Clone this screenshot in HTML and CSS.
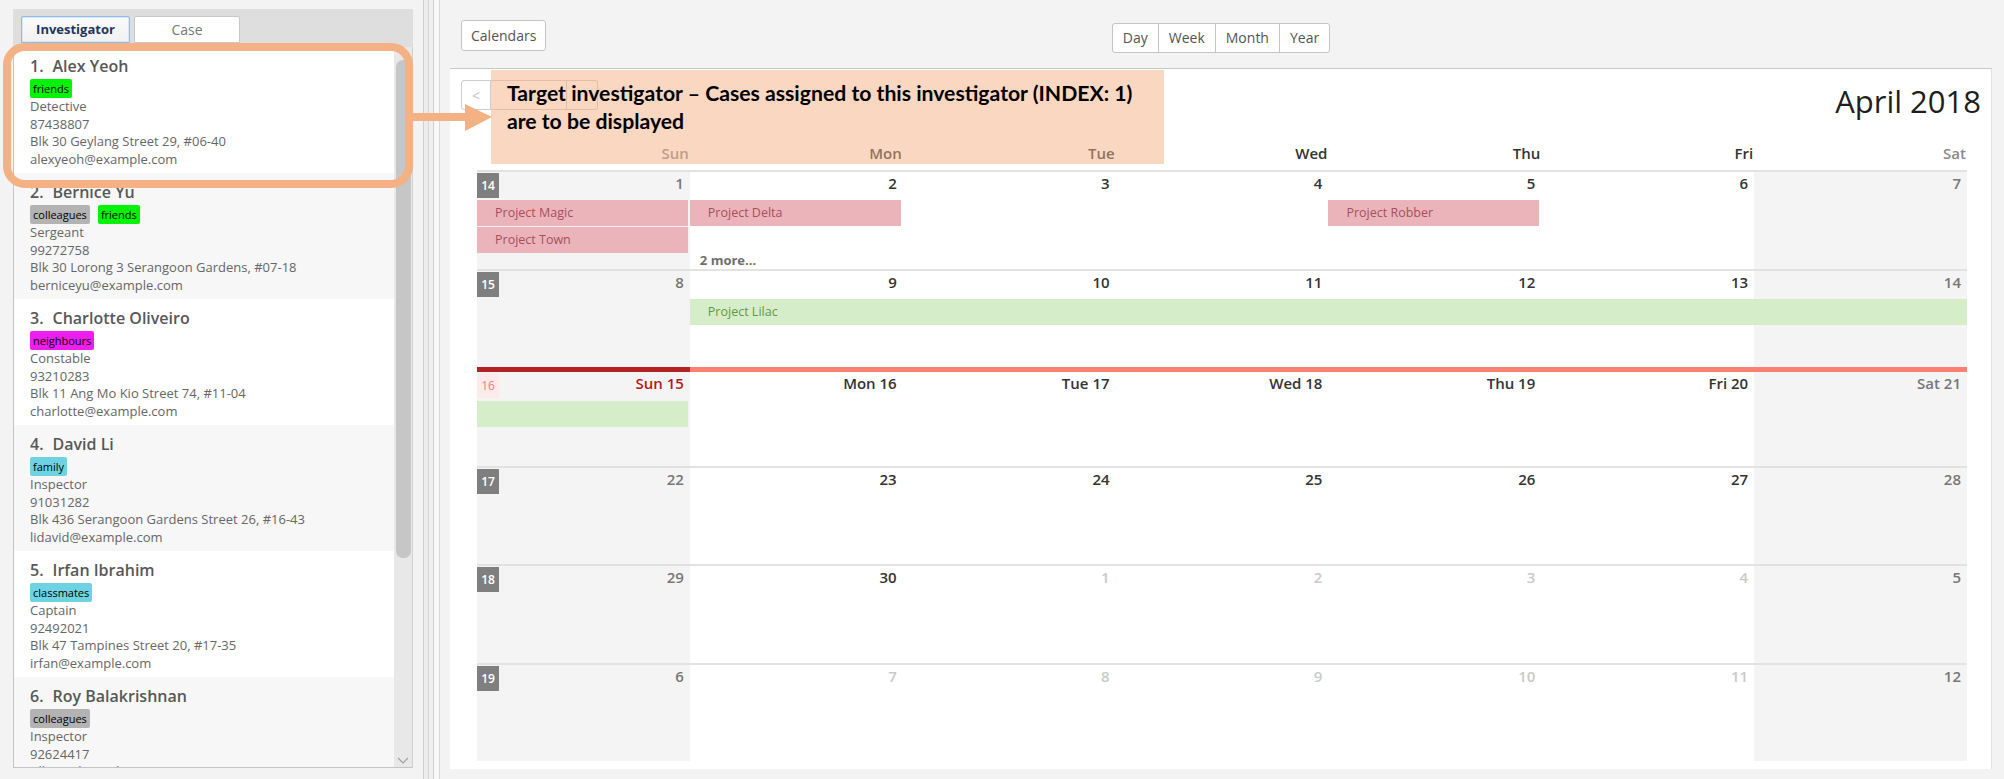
FILE: index.html
```html
<!DOCTYPE html>
<html lang="en">
<head>
<meta charset="utf-8">
<title>Investigators and Calendar</title>
<link rel="stylesheet" href="styles.css">
</head>
<body>
<div class="app">
  <aside class="sidebar">
    <div class="tabs">
      <div class="tab tab-active">Investigator</div>
      <div class="tab tab-case">Case</div>
    </div>
    <div class="list-wrap">
      <div class="list">
        <div class="card">
          <div class="name"><span class="idx">1.</span>Alex Yeoh</div>
          <div class="tags"><span class="tag t-friends">friends</span></div>
          <div class="line">Detective</div>
          <div class="line">87438807</div>
          <div class="line">Blk 30 Geylang Street 29, #06-40</div>
          <div class="line">alexyeoh@example.com</div>
        </div>
        <div class="card">
          <div class="name"><span class="idx">2.</span>Bernice Yu</div>
          <div class="tags"><span class="tag t-colleagues">colleagues</span><span class="tag t-friends">friends</span></div>
          <div class="line">Sergeant</div>
          <div class="line">99272758</div>
          <div class="line">Blk 30 Lorong 3 Serangoon Gardens, #07-18</div>
          <div class="line">berniceyu@example.com</div>
        </div>
        <div class="card">
          <div class="name"><span class="idx">3.</span>Charlotte Oliveiro</div>
          <div class="tags"><span class="tag t-neighbours">neighbours</span></div>
          <div class="line">Constable</div>
          <div class="line">93210283</div>
          <div class="line">Blk 11 Ang Mo Kio Street 74, #11-04</div>
          <div class="line">charlotte@example.com</div>
        </div>
        <div class="card">
          <div class="name"><span class="idx">4.</span>David Li</div>
          <div class="tags"><span class="tag t-family">family</span></div>
          <div class="line">Inspector</div>
          <div class="line">91031282</div>
          <div class="line">Blk 436 Serangoon Gardens Street 26, #16-43</div>
          <div class="line">lidavid@example.com</div>
        </div>
        <div class="card">
          <div class="name"><span class="idx">5.</span>Irfan Ibrahim</div>
          <div class="tags"><span class="tag t-classmates">classmates</span></div>
          <div class="line">Captain</div>
          <div class="line">92492021</div>
          <div class="line">Blk 47 Tampines Street 20, #17-35</div>
          <div class="line">irfan@example.com</div>
        </div>
        <div class="card">
          <div class="name"><span class="idx">6.</span>Roy Balakrishnan</div>
          <div class="tags"><span class="tag t-colleagues">colleagues</span></div>
          <div class="line">Inspector</div>
          <div class="line">92624417</div>
          <div class="line">Blk 45 Aljunied Street 85, #11-31</div>
        </div>
      </div>
      <div class="scrollbar">
        <div class="thumb"></div>
        <svg class="sb-arrow" width="12" height="7" viewBox="0 0 12 7"><path d="M1 1 L6 6 L11 1" fill="none" stroke="#a0a0a0" stroke-width="1.2"/></svg>
      </div>
    </div>
  </aside>

  <div class="splitter"><div class="splitter-bar"></div></div>

  <main class="cal-pane">
    <div class="toolbar">
      <button class="btn btn-cal">Calendars</button>
      <div class="views">
        <span class="view">Day</span>
        <span class="view">Week</span>
        <span class="view">Month</span>
        <span class="view">Year</span>
      </div>
      <div></div>
    </div>

    <section class="month">
      <div class="nav">
        <div class="navbtns">
          <button class="nb nb-prev">&lt;</button>
          <button class="nb nb-today"></button>
          <button class="nb nb-next"></button>
        </div>
        <h1 class="title">April 2018</h1>
      </div>

      <div class="weekdays">
        <div class="wd we">Sun</div>
        <div class="wd">Mon</div>
        <div class="wd">Tue</div>
        <div class="wd">Wed</div>
        <div class="wd">Thu</div>
        <div class="wd">Fri</div>
        <div class="wd we">Sat</div>
      </div>

      <div class="weeks">
        <div class="week">
          <div class="day we"><span class="wk">14</span><span class="date">1</span></div>
          <div class="day"><span class="date">2</span></div>
          <div class="day"><span class="date">3</span></div>
          <div class="day"><span class="date">4</span></div>
          <div class="day"><span class="date">5</span></div>
          <div class="day"><span class="date">6</span></div>
          <div class="day we"><span class="date">7</span></div>
          <div class="ev red ev-magic">Project Magic</div>
          <div class="ev red ev-delta">Project Delta</div>
          <div class="ev red ev-robber">Project Robber</div>
          <div class="ev red ev-town">Project Town</div>
          <div class="more">2 more...</div>
        </div>

        <div class="week">
          <div class="day we"><span class="wk">15</span><span class="date">8</span></div>
          <div class="day"><span class="date">9</span></div>
          <div class="day"><span class="date">10</span></div>
          <div class="day"><span class="date">11</span></div>
          <div class="day"><span class="date">12</span></div>
          <div class="day"><span class="date">13</span></div>
          <div class="day we"><span class="date">14</span></div>
          <div class="ev green ev-lilac">Project Lilac</div>
        </div>

        <div class="week week-now">
          <div class="day we today"><span class="wk wk-now">16</span><span class="date">Sun 15</span></div>
          <div class="day"><span class="date">Mon 16</span></div>
          <div class="day"><span class="date">Tue 17</span></div>
          <div class="day"><span class="date">Wed 18</span></div>
          <div class="day"><span class="date">Thu 19</span></div>
          <div class="day"><span class="date">Fri 20</span></div>
          <div class="day we"><span class="date">Sat 21</span></div>
          <div class="ev green ev-lilac-end"></div>
        </div>

        <div class="week">
          <div class="day we"><span class="wk">17</span><span class="date">22</span></div>
          <div class="day"><span class="date">23</span></div>
          <div class="day"><span class="date">24</span></div>
          <div class="day"><span class="date">25</span></div>
          <div class="day"><span class="date">26</span></div>
          <div class="day"><span class="date">27</span></div>
          <div class="day we"><span class="date">28</span></div>
        </div>

        <div class="week">
          <div class="day we"><span class="wk">18</span><span class="date">29</span></div>
          <div class="day"><span class="date">30</span></div>
          <div class="day"><span class="date muted">1</span></div>
          <div class="day"><span class="date muted">2</span></div>
          <div class="day"><span class="date muted">3</span></div>
          <div class="day"><span class="date muted">4</span></div>
          <div class="day we"><span class="date">5</span></div>
        </div>

        <div class="week">
          <div class="day we"><span class="wk">19</span><span class="date">6</span></div>
          <div class="day"><span class="date muted">7</span></div>
          <div class="day"><span class="date muted">8</span></div>
          <div class="day"><span class="date muted">9</span></div>
          <div class="day"><span class="date muted">10</span></div>
          <div class="day"><span class="date muted">11</span></div>
          <div class="day we"><span class="date">12</span></div>
        </div>
      </div>
    </section>
  </main>
</div>

<div class="annot-ring"></div>
<svg class="annot-arrow" width="90" height="35" viewBox="0 0 90 35">
  <rect x="8" y="13" width="55" height="8" fill="#f4b183"/>
  <polygon points="60,4 87,17 60,31" fill="#f4b183"/>
</svg>
<div class="annot-note">Target investigator – Cases assigned to this investigator (INDEX: 1)<br>are to be displayed</div>
</body>
</html>
```

FILE: styles.css
```css
* { box-sizing: border-box; margin: 0; padding: 0; }

html, body { width: 2004px; height: 779px; overflow: hidden; }

body {
  position: relative;
  background: #f3f3f3;
  font-family: "Open Sans", "Liberation Sans", sans-serif;
  color: #333;
}

.app { display: flex; height: 779px; }

/* ---------- sidebar ---------- */
.sidebar {
  width: 413px;
  padding: 9px 0 11px 13px;
  display: flex;
  flex-direction: column;
}

.tabs {
  height: 38px;
  background: #dedede;
  display: flex;
  gap: 4px;
  padding: 7px 0 0 8px;
}

.tab {
  height: 27px;
  font-size: 14px;
  line-height: 25px;
  text-align: center;
  background: #fff;
  border: 1px solid #c8c8c8;
  border-radius: 2px 2px 0 0;
  color: #777;
}

.tab-active {
  width: 109px;
  font-size: 13px;
  font-weight: 700;
  color: #1d3660;
  background: linear-gradient(#fafafa, #f1f1f1);
  border: 1px solid #8fbbe8;
  box-shadow: inset 0 0 0 1px #d6e7f8;
}

.tab-case { width: 106px; }

.list-wrap {
  flex: 1;
  display: flex;
  border-left: 1px solid #c4c4c4;
  border-bottom: 1px solid #c4c4c4;
  border-right: 1px solid #d0d0d0;
  overflow: hidden;
  background: #fff;
}

.list { width: 380px; overflow: hidden; }

.card {
  height: 126px;
  padding: 8px 0 0 16px;
  background: #fff;
}
.card:nth-child(even) { background: #f7f7f7; }

.name {
  font-size: 16px;
  font-weight: 600;
  line-height: 22px;
  color: #585858;
  white-space: nowrap;
}
.name .idx { margin-right: 9px; }

.tags { display: flex; gap: 8px; margin-top: 2px; height: 19px; }

.tag {
  height: 19px;
  line-height: 19px;
  padding: 0 3px;
  font-size: 11px;
  color: #000;
  border-radius: 2px;
}
.t-friends { background: #00f400; }
.t-colleagues { background: #b3b3b3; }
.t-neighbours { background: #ee1eee; }
.t-family { background: #6dd3e2; }
.t-classmates { background: #6dd3e2; }

.line {
  font-size: 13px;
  line-height: 17.6px;
  color: #666;
  white-space: nowrap;
}

.scrollbar {
  width: 18px;
  background: #e8e8e8;
  display: flex;
  flex-direction: column;
  align-items: center;
  padding: 13px 0 3px;
}
.thumb {
  width: 15px;
  height: 498px;
  background: #c6c6c6;
  border-radius: 7px;
}
.sb-arrow { margin-top: auto; }

/* ---------- splitter ---------- */
.splitter { width: 37px; padding-left: 10px; }
.splitter-bar {
  width: 17px;
  height: 100%;
  border-left: 1px solid #cfcfcf;
  border-right: 1px solid #d8d8d8;
  background: linear-gradient(to right,
    #ececec 0 4px, #d6d6d6 4px 5px, #f0f0f0 5px 9px,
    #cfcfcf 9px 10px, #f8f8f8 10px 15px);
}

/* ---------- calendar pane ---------- */
.cal-pane {
  flex: 1;
  display: flex;
  flex-direction: column;
  padding: 0 12px 10px 0;
}

.toolbar {
  height: 68px;
  display: grid;
  grid-template-columns: 1fr auto 1fr;
  align-items: start;
}

.btn {
  font-family: inherit;
  cursor: default;
}

.btn-cal {
  justify-self: start;
  margin: 20px 0 0 11px;
  height: 31px;
  padding: 0 9px;
  border: 1px solid #c4c4c4;
  border-radius: 3px;
  background: #fff;
  font-size: 14px;
  color: #555;
}

.views {
  margin-top: 23px;
  display: flex;
  height: 30px;
  border: 1px solid #c4c4c4;
  border-radius: 3px;
  background: #fff;
}
.view {
  padding: 0 10px;
  font-size: 14px;
  line-height: 28px;
  color: #555;
}
.view + .view { border-left: 1px solid #c4c4c4; }

.month {
  flex: 1;
  display: flex;
  flex-direction: column;
  background: #fff;
  border-top: 1px solid #c8c8c8;
  border-right: 1px solid #e2e2e2;
  padding: 11px 10px 8px 11px;
}

.nav {
  height: 42px;
  display: flex;
  justify-content: space-between;
  align-items: flex-start;
}

.navbtns { display: flex; height: 30px; }
.nb {
  height: 30px;
  background: #fff;
  border: 1px solid #cccccc;
  font-family: inherit;
  font-size: 14px;
  color: #c4c4c4;
}
.nb-prev { width: 30px; border-radius: 3px 0 0 3px; }
.nb-today { width: 76px; border-left: none; }
.nb-next { width: 31px; border-left: none; border-radius: 0 3px 3px 0; }

.title {
  font-size: 31px;
  font-weight: 400;
  line-height: 42px;
  color: #1e1e1e;
}

.weekdays {
  height: 48px;
  margin: 0 14px 0 16px;
  display: grid;
  grid-template-columns: repeat(7, 1fr);
  align-items: end;
  padding-bottom: 7px;
}
.wd {
  text-align: right;
  padding-right: 1px;
  font-size: 15px;
  font-weight: 600;
  line-height: 20px;
  color: #333;
}
.wd.we { color: #8a8a8a; }

.weeks {
  flex: 1;
  margin: 0 14px 0 16px;
  display: grid;
  grid-template-rows: repeat(6, 1fr);
}

.week {
  display: grid;
  grid-template-columns: repeat(7, 1fr);
  grid-template-rows: 30px 27px 27px 1fr;
  min-height: 0;
}
.week-now { grid-template-rows: 34px 27px 27px 1fr; }

.day {
  grid-row: 1 / -1;
  display: flex;
  align-items: flex-start;
  padding-right: 6px;
  background: #fff;
  border-top: 2px solid #e2e2e2;
}
.day:nth-child(1) { grid-column: 1; }
.day:nth-child(2) { grid-column: 2; }
.day:nth-child(3) { grid-column: 3; }
.day:nth-child(4) { grid-column: 4; }
.day:nth-child(5) { grid-column: 5; }
.day:nth-child(6) { grid-column: 6; }
.day:nth-child(7) { grid-column: 7; }
.day.we { background: #f4f4f4; }

.week-now .day { border-top: 5px solid #fa8072; }
.week-now .day.today { border-top-color: #b22222; }

.date {
  margin-left: auto;
  font-size: 15px;
  font-weight: 600;
  line-height: 22px;
  color: #333;
}
.day.we .date { color: #777; }
.date.muted { color: #cacaca; }
.day.today .date { color: #b31b1b; }

.wk {
  width: 22px;
  height: 25px;
  margin-top: 1px;
  background: #7f7f7f;
  color: #fff;
  font-size: 12px;
  font-weight: 600;
  line-height: 25px;
  text-align: center;
}
.wk.wk-now {
  background: #fdeaea;
  color: #f08080;
  font-weight: 400;
}

.ev {
  height: 26px;
  margin-right: 2px;
  align-self: start;
  padding-left: 18px;
  font-size: 12.5px;
  line-height: 26px;
  white-space: nowrap;
  overflow: hidden;
}
.ev.red { background: #ebb4ba; color: #a6505d; }
.ev.green { background: #d5edc9; color: #5e9a44; }

.ev-magic { grid-column: 1; grid-row: 2; }
.ev-delta { grid-column: 2; grid-row: 2; }
.ev-robber { grid-column: 5; grid-row: 2; }
.ev-town { grid-column: 1; grid-row: 3; }
.ev-lilac { grid-column: 2 / 8; grid-row: 2; margin-right: 0; }
.ev-lilac-end { grid-column: 1; grid-row: 2; }

.more {
  grid-column: 2;
  grid-row: 4;
  align-self: start;
  padding-left: 10px;
  margin-top: -1px;
  font-size: 13px;
  font-weight: 700;
  line-height: 14px;
  color: #6e6e6e;
}

/* ---------- annotation overlays ---------- */
.annot-ring {
  position: absolute;
  left: 3px;
  top: 43px;
  width: 410px;
  height: 145px;
  border: 8px solid #f4b183;
  border-radius: 22px;
}

.annot-arrow {
  position: absolute;
  left: 405px;
  top: 100px;
}

.annot-note {
  position: absolute;
  left: 491px;
  top: 70px;
  width: 673px;
  height: 94px;
  padding: 9px 0 0 16px;
  background: rgba(244, 176, 132, 0.5);
  font-family: "Lato", "Liberation Sans", sans-serif;
  font-weight: 700;
  font-size: 21.2px;
  line-height: 28px;
  color: #000;
  white-space: nowrap;
}
```
